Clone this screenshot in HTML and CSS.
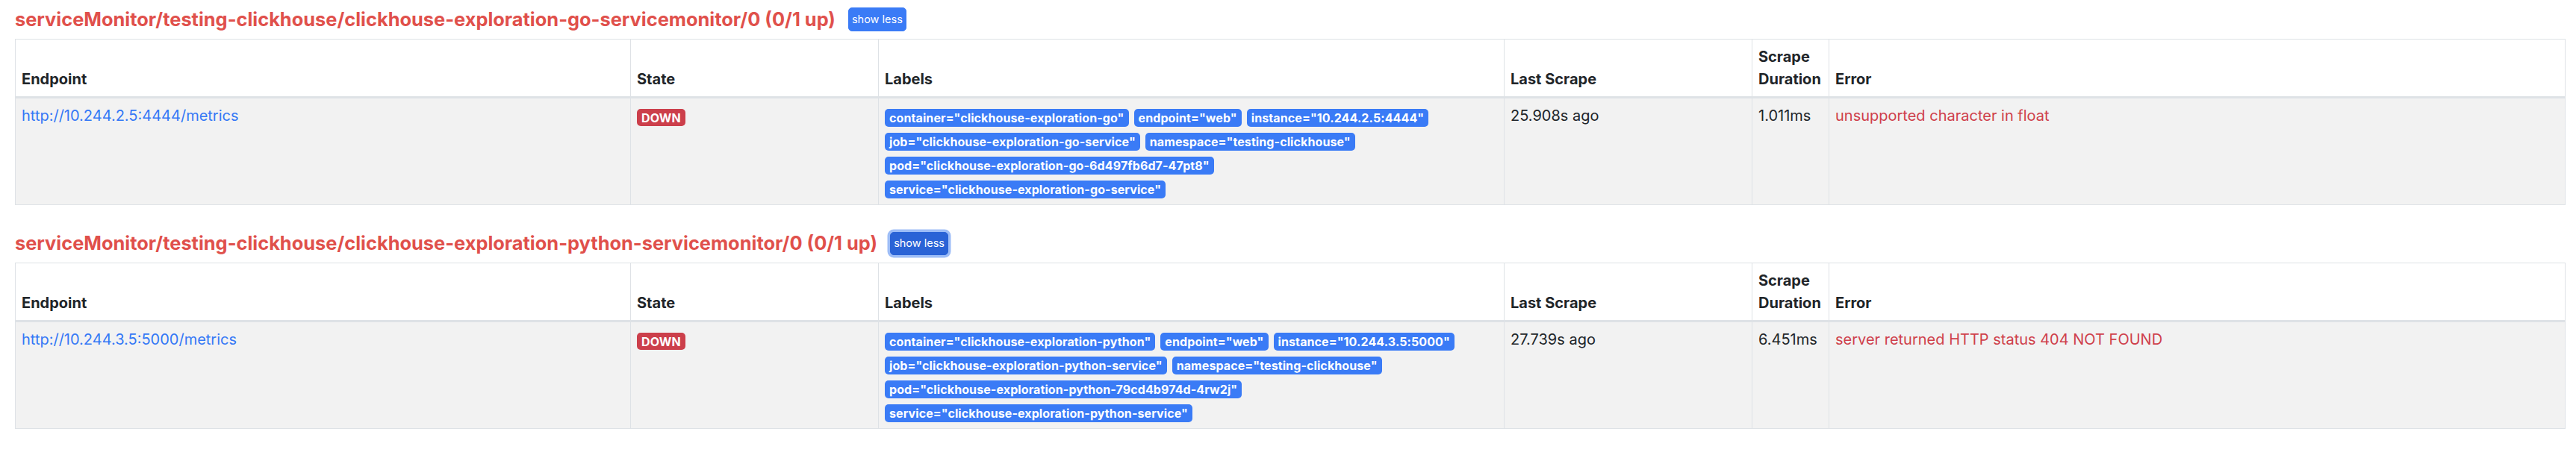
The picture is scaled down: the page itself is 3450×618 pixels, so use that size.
FILE: index.html
```html
<!DOCTYPE html>
<html lang="en">
<head>
<meta charset="utf-8">
<title>Targets</title>
<link rel="stylesheet" href="styles.css">
</head>
<body>
<div class="page">
  <section class="pool">
    <div class="pool-header">
      <h2 class="pool-title">serviceMonitor/testing-clickhouse/clickhouse-exploration-go-servicemonitor/0 (0/1 up)</h2>
      <button class="btn">show less</button>
    </div>
    <table class="targets">
      <colgroup>
        <col class="c-endpoint"><col class="c-state"><col class="c-labels"><col class="c-last"><col class="c-dur"><col class="c-error">
      </colgroup>
      <thead>
        <tr><th>Endpoint</th><th>State</th><th>Labels</th><th>Last Scrape</th><th>Scrape Duration</th><th>Error</th></tr>
      </thead>
      <tbody>
        <tr>
          <td><a class="link" href="#">http://10.244.2.5:4444/metrics</a></td>
          <td><span class="badge badge-down">DOWN</span></td>
          <td>
            <div class="labels">
              <span class="badge badge-label">container="clickhouse-exploration-go"</span>
              <span class="badge badge-label">endpoint="web"</span>
              <span class="badge badge-label">instance="10.244.2.5:4444"</span>
              <span class="badge badge-label">job="clickhouse-exploration-go-service"</span>
              <span class="badge badge-label">namespace="testing-clickhouse"</span>
              <span class="badge badge-label">pod="clickhouse-exploration-go-6d497fb6d7-47pt8"</span>
              <span class="badge badge-label">service="clickhouse-exploration-go-service"</span>
            </div>
          </td>
          <td>25.908s ago</td>
          <td>1.011ms</td>
          <td class="error">unsupported character in float</td>
        </tr>
      </tbody>
    </table>
  </section>

  <section class="pool">
    <div class="pool-header">
      <h2 class="pool-title">serviceMonitor/testing-clickhouse/clickhouse-exploration-python-servicemonitor/0 (0/1 up)</h2>
      <button class="btn btn-focus">show less</button>
    </div>
    <table class="targets">
      <colgroup>
        <col class="c-endpoint"><col class="c-state"><col class="c-labels"><col class="c-last"><col class="c-dur"><col class="c-error">
      </colgroup>
      <thead>
        <tr><th>Endpoint</th><th>State</th><th>Labels</th><th>Last Scrape</th><th>Scrape Duration</th><th>Error</th></tr>
      </thead>
      <tbody>
        <tr>
          <td><a class="link" href="#">http://10.244.3.5:5000/metrics</a></td>
          <td><span class="badge badge-down">DOWN</span></td>
          <td>
            <div class="labels">
              <span class="badge badge-label">container="clickhouse-exploration-python"</span>
              <span class="badge badge-label">endpoint="web"</span>
              <span class="badge badge-label">instance="10.244.3.5:5000"</span>
              <span class="badge badge-label">job="clickhouse-exploration-python-service"</span>
              <span class="badge badge-label">namespace="testing-clickhouse"</span>
              <span class="badge badge-label">pod="clickhouse-exploration-python-79cd4b974d-4rw2j"</span>
              <span class="badge badge-label">service="clickhouse-exploration-python-service"</span>
            </div>
          </td>
          <td>27.739s ago</td>
          <td>6.451ms</td>
          <td class="error">server returned HTTP status 404 NOT FOUND</td>
        </tr>
      </tbody>
    </table>
  </section>
</div>
</body>
</html>
```

FILE: styles.css
```css
* { box-sizing: border-box; }

html, body {
  margin: 0;
  padding: 0;
  background: #ffffff;
}

body {
  font-family: Inter, "Noto Sans", "Liberation Sans", sans-serif;
  font-size: 20px;
  line-height: 1.5;
  color: #212529;
}

.page {
  padding: 0 15px 0 20px;
}

.pool {
  height: 300px;
}

.pool-header {
  display: flex;
  align-items: center;
  gap: 17px;
  height: 52px;
  padding: 10px 0;
}

.pool-title {
  margin: 0;
  font-size: 25.4px;
  font-weight: 700;
  line-height: 32px;
  color: #e0504b;
  white-space: nowrap;
}

.btn {
  font-family: inherit;
  font-size: 14.5px;
  line-height: 1.5;
  height: 32px;
  padding: 0 4px;
  color: #ffffff;
  background: #3a7bf6;
  border: 1px solid #3a7bf6;
  border-radius: 5px;
}

.btn-focus {
  height: 31px;
  background: #2a63d6;
  border-color: #2a63d6;
  box-shadow: 0 0 0 3.5px #9dbdf7;
}

.targets {
  width: 3415px;
  table-layout: fixed;
  border-collapse: collapse;
  border: 1px solid #dee2e6;
}

.c-endpoint { width: 824px; }
.c-state { width: 332px; }
.c-labels { width: 838px; }
.c-last { width: 332px; }
.c-dur { width: 103px; }
.c-error { width: 986px; }

.targets th,
.targets td {
  padding: 8px;
  border: 1px solid #dee2e6;
  text-align: left;
}

.targets th {
  vertical-align: bottom;
  font-weight: 700;
  background: #ffffff;
  border-bottom: 3px solid #dee2e6;
}

.targets td {
  vertical-align: top;
  background: #f2f2f2;
}

.link {
  color: #3478f6;
  text-decoration: none;
}

.error {
  color: #cf3f4b;
}

.badge {
  display: inline-block;
  font-size: 16px;
  font-weight: 700;
  line-height: 1;
  letter-spacing: 0.1px;
  color: #ffffff;
  white-space: nowrap;
  border-radius: 5px;
}

.badge-down {
  margin-top: 6px;
  padding: 3.5px 6px;
  background: #cc3f4b;
}

.badge-label {
  padding: 4px 6px;
  background: #3a7bf6;
}

.labels {
  display: flex;
  flex-wrap: wrap;
  align-items: flex-start;
  gap: 8px 7px;
  padding-top: 6px;
}
```
